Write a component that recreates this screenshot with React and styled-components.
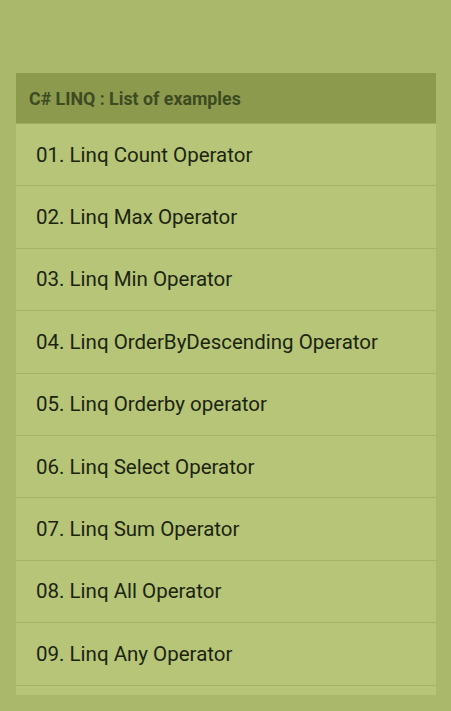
import React from "react"
import styled, { createGlobalStyle } from "styled-components"

const GlobalStyle = createGlobalStyle`
  html, body {
    margin: 0;
    padding: 0;
    background: #aab86b;
    font-family: Roboto, "Liberation Sans", sans-serif;
  }
`

const Page = styled.div`
  height: 711px;
  padding: 73px 15px 0 16px;
  box-sizing: border-box;
  overflow: hidden;
`

const Card = styled.section`
  height: 622px;
  background: #b6c577;
  overflow: hidden;
  display: flex;
  flex-direction: column;
`

const Title = styled.h1`
  flex: none;
  margin: 0;
  height: 50px;
  display: flex;
  align-items: center;
  padding-left: 13px;
  background: #8b9a4d;
  border-bottom: 1px solid #9fad60;
  color: #3d4a22;
  font-size: 17.8px;
  font-weight: 700;
`

const List = styled.ul`
  list-style: none;
  margin: 0;
  padding: 0;
`

const Item = styled.li`
  height: 61.4px;
  display: flex;
  align-items: center;
  padding-left: 20px;
  border-bottom: 1px solid #a4b366;
  color: #1c2410;
  font-size: 20.5px;
`

const examples = [
  "Linq Count Operator",
  "Linq Max Operator",
  "Linq Min Operator",
  "Linq OrderByDescending Operator",
  "Linq Orderby operator",
  "Linq Select Operator",
  "Linq Sum Operator",
  "Linq All Operator",
  "Linq Any Operator",
]

const App = () => (
  <>
    <GlobalStyle />
    <Page>
      <Card>
        <Title>C# LINQ : List of examples</Title>
        <List>
          {examples.map((name, i) => (
            <Item key={name}>
              {String(i + 1).padStart(2, "0")}. {name}
            </Item>
          ))}
        </List>
      </Card>
    </Page>
  </>
)

export default App
